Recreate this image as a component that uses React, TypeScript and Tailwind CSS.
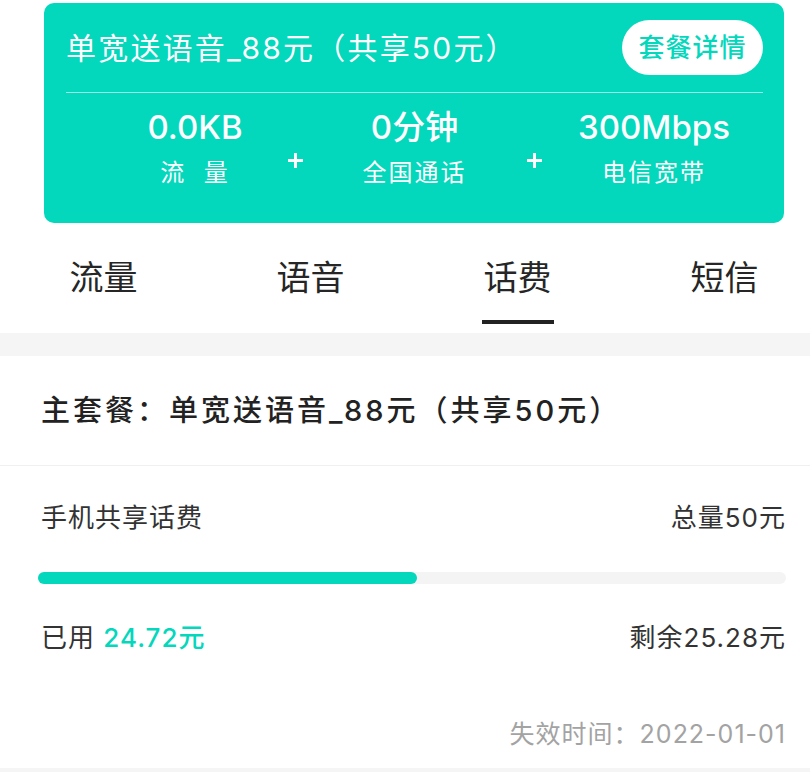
import React from "react";

const FONT = { fontFamily: 'Inter, "Noto Sans CJK SC", sans-serif' };

function Stat({ value, label, w }: { value: string; label: string; w: string }) {
  return (
    <div className={`flex flex-col items-center ${w}`}>
      <div className="text-[33px] leading-[40px] font-medium text-white">{value}</div>
      <div className="mt-[10px] text-[24px] leading-[32px] tracking-[2px] text-white whitespace-pre">{label}</div>
    </div>
  );
}

function Plus() {
  return (
    <div className="w-[30px] flex justify-center mt-[46px]">
      <svg width="15" height="15" viewBox="0 0 15 15">
        <rect x="0" y="6" width="15" height="3" fill="#ffffff" />
        <rect x="6" y="0" width="3" height="15" fill="#ffffff" />
      </svg>
    </div>
  );
}

export default function App() {
  const tabs = ["流量", "语音", "话费", "短信"];
  return (
    <div className="w-[810px] h-[772px] bg-white overflow-hidden" style={FONT}>
      {/* card */}
      <div className="pt-[3px] pl-[44px]">
        <div className="w-[740px] h-[220px] bg-[#03d7bc] rounded-[10px] pl-[22px] pr-[21px]">
          <div className="h-[89px] flex items-center justify-between">
            <div className="text-[30px] leading-[40px] text-white tracking-[2.2px]">单宽送语音_88元（共享50元）</div>
            <div className="w-[141px] h-[55px] rounded-full bg-white flex items-center justify-center text-[26px] font-medium tracking-[1px] text-[#03d7bc]">
              套餐详情
            </div>
          </div>
          <div className="h-px bg-white/60" />
          <div className="flex items-start pt-[14px] pl-[44px]">
            <Stat value="0.0KB" label="流  量" w="w-[170px]" />
            <Plus />
            <Stat value="0分钟" label="全国通话" w="w-[209px]" />
            <Plus />
            <Stat value="300Mbps" label="电信宽带" w="w-[210px]" />
          </div>
        </div>
      </div>

      {/* tabs */}
      <div className="flex h-[110px] overflow-hidden">
        {tabs.map((t, i) => (
          <div key={t} className="w-[207px] shrink-0 flex flex-col items-center pt-[35px]">
            <div className="text-[34px] leading-[40px] text-[#262626]">{t}</div>
            {i === 2 ? <div className="mt-[22px] w-[72px] h-[4px] bg-[#222]" /> : null}
          </div>
        ))}
      </div>

      <div className="h-[23px] bg-[#f5f5f5]" />

      <div className="h-[109px] flex items-center pl-[41px]">
        <div className="text-[29px] leading-[36px] font-medium tracking-[3px] text-[#222]">主套餐：单宽送语音_88元（共享50元）</div>
      </div>
      <div className="h-px bg-[#f0f0f0]" />

      <div className="pl-[38px] pr-[24px] pt-[34px]">
        <div className="flex justify-between items-center pl-[3px] text-[26px] leading-[36px] tracking-[1px] text-[#333]">
          <span>手机共享话费</span>
          <span>总量50元</span>
        </div>
        <div className="mt-[36px] h-[12px] rounded-full bg-[#f4f4f4]">
          <div className="h-full w-[379px] rounded-full bg-[#03d7bc]" />
        </div>
        <div className="mt-[36px] flex justify-between items-center pl-[3px] text-[26px] leading-[36px] tracking-[1px] text-[#333]">
          <span>
            已用 <span className="text-[#03d7bc] font-medium">24.72元</span>
          </span>
          <span>剩余25.28元</span>
        </div>
        <div className="mt-[61px] flex justify-end text-[25px] leading-[34px] tracking-[1px] text-[#a3a3a3]">
          失效时间：2022-01-01
        </div>
      </div>
      <div className="mt-[17px] h-[10px] bg-[#f5f5f5]" />
    </div>
  );
}
